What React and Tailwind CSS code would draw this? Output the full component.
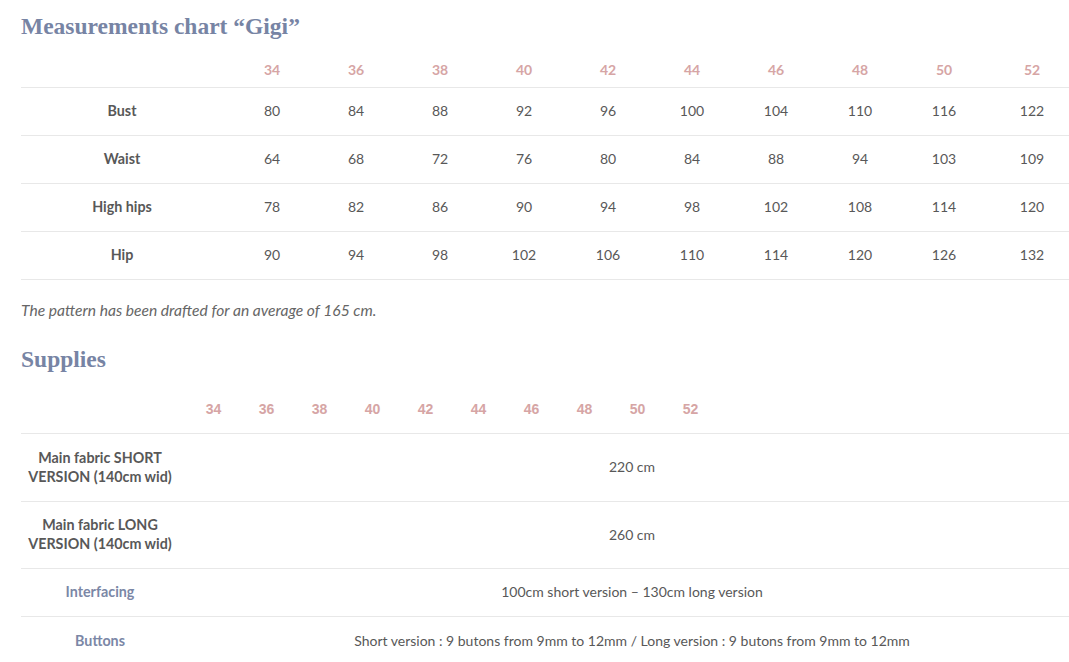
import React from 'react';

const sizes = ['34', '36', '38', '40', '42', '44', '46', '48', '50', '52'];

const measurements = [
  { label: 'Bust', values: ['80', '84', '88', '92', '96', '100', '104', '110', '116', '122'] },
  { label: 'Waist', values: ['64', '68', '72', '76', '80', '84', '88', '94', '103', '109'] },
  { label: 'High hips', values: ['78', '82', '86', '90', '94', '98', '102', '108', '114', '120'] },
  { label: 'Hip', values: ['90', '94', '98', '102', '106', '110', '114', '120', '126', '132'] },
];

const supplies = [
  { label: ['Main fabric SHORT', 'VERSION (140cm wid)'], value: '220 cm', h: 'h-[68px]' },
  { label: ['Main fabric LONG', 'VERSION (140cm wid)'], value: '260 cm', h: 'h-[67px]' },
  { label: ['Interfacing'], value: '100cm short version – 130cm long version', blue: true, h: 'h-[48px]' },
  { label: ['Buttons'], value: 'Short version : 9 butons from 9mm to 12mm / Long version : 9 butons from 9mm to 12mm', blue: true, h: 'h-[48px]' },
];

function Heading({ children, className }) {
  return (
    <h2
      className={`text-[23.5px] leading-[28px] font-bold text-[#7784a4] ${className}`}
      style={{ fontFamily: '"Liberation Serif", serif' }}
    >
      {children}
    </h2>
  );
}

export default function App() {
  return (
    <div className="bg-white min-h-screen pl-[21px] pt-[12px] text-[14px] text-[#585858]" style={{ fontFamily: 'Lato, "Open Sans", sans-serif' }}>
      <Heading>Measurements chart “Gigi”</Heading>

      <div className="grid grid-cols-[209px_repeat(9,84px)_1fr] pt-[21px] pb-[9px] border-b border-[#e8e8e8] leading-[17px]">
        <div />
        {sizes.map((s, i) => (
          <div key={s} className={`text-center font-bold text-[#d6a5a5] ${i === 9 ? 'pl-[9px]' : ''}`}>{s}</div>
        ))}
      </div>
      {measurements.map(row => (
        <div key={row.label} className="grid grid-cols-[209px_repeat(9,84px)_1fr] h-[48px] pb-[2px] items-center border-b border-[#e8e8e8]">
          <div className="text-center font-bold pr-[7px] text-[14.3px]">{row.label}</div>
          {row.values.map((v, i) => (
            <div key={i} className={`text-center ${i === 9 ? 'pl-[9px]' : ''}`}>{v}</div>
          ))}
        </div>
      ))}

      <p className="mt-[19px] leading-[22px] text-[15.6px] italic text-[#666]">
        The pattern has been drafted for an average of 165 cm.
      </p>

      <Heading className="mt-[24px]">Supplies</Heading>

      <div className="grid grid-cols-[166px_repeat(10,53px)_1fr] pt-[28px] pb-[15px] border-b border-[#e8e8e8] leading-[17px]">
        <div />
        {sizes.map(s => (
          <div key={s} className="text-center font-bold text-[#d6a5a5]" style={{ fontFamily: '"Liberation Sans", Arial, sans-serif' }}>{s}</div>
        ))}
        <div />
      </div>
      {supplies.map((row, idx) => (
        <div
          key={idx}
          className={`grid grid-cols-[166px_1fr] items-center leading-[19px] pb-[2px] ${row.h} ${idx < supplies.length - 1 ? 'border-b border-[#e8e8e8]' : ''}`}
        >
          <div className={`text-center font-bold pr-[8px] text-[14.3px] ${row.blue ? 'text-[#7b87a6]' : ''}`}>
            {row.label.map((l, i) => (
              <div key={i}>{l}</div>
            ))}
          </div>
          <div className="text-center pl-[8px]">{row.value}</div>
        </div>
      ))}
    </div>
  );
}
